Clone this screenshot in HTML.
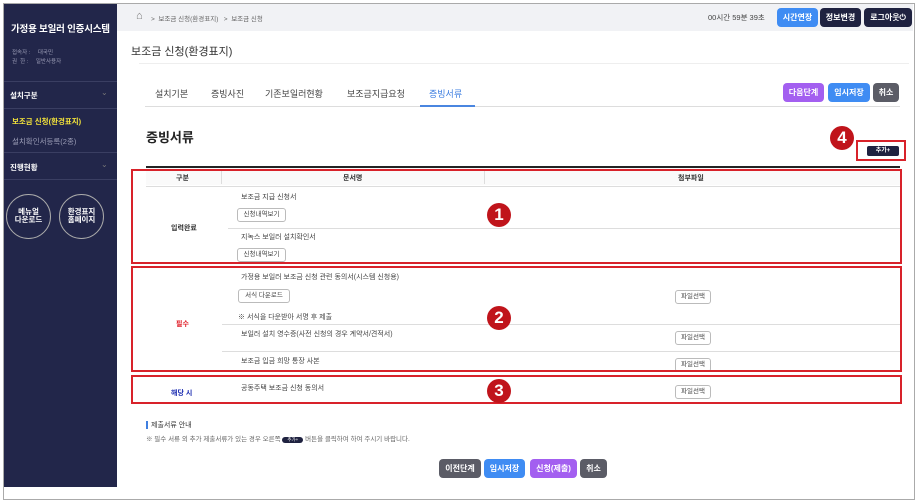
<!DOCTYPE html><html><head><meta charset="utf-8"><style>
*{margin:0;padding:0;box-sizing:border-box}
body{width:919px;height:504px;background:#fff;position:relative;overflow:hidden;font-family:"Liberation Sans","Noto Sans CJK KR",sans-serif;color:#333}
.a{position:absolute;white-space:nowrap}
.sb{background:#22264a;left:4px;top:4px;width:113px;height:483px}
.ln{position:absolute;height:1px;background:#3a3e62;left:4px;width:113px}
.btn{position:absolute;color:#fff;font-size:8px;font-weight:bold;border-radius:4px;text-align:center;line-height:19px;height:19px}
.wb{position:absolute;border:1px solid #bbb;border-radius:3px;font-size:6.5px;color:#444;text-align:center;background:#fff;height:14px;line-height:12px}
.rb{position:absolute;border:2.5px solid #d8222a}
.bd{position:absolute;width:24px;height:24px;border-radius:50%;background:#c0141b;color:#fff;font-weight:bold;font-size:17px;text-align:center;line-height:24px}
.t{font-size:7px;color:#444}
.g{position:absolute;height:1px;background:#ddd}
</style></head><body>
<div class="a" style="left:3px;top:3px;width:912px;height:497px;border:1px solid #aaa"></div>
<div class="a sb"></div>
<div class="a" style="left:11px;top:21px;color:#fff;font-size:9.5px;font-weight:bold;letter-spacing:-0.2px">가정용 보일러 인증시스템</div>
<div class="a" style="left:12px;top:49px;color:#9a9cb5;font-size:5.5px;line-height:9px">접속자 :&nbsp;&nbsp;&nbsp;&nbsp;&nbsp;대국민<br>권&nbsp;&nbsp;한 :&nbsp;&nbsp;&nbsp;&nbsp;&nbsp;일반사용자</div>
<div class="ln" style="top:81px"></div><div class="ln" style="top:108px"></div><div class="ln" style="top:152px"></div><div class="ln" style="top:179px"></div>
<div class="a" style="left:10px;top:90px;color:#fff;font-size:7.5px;font-weight:bold">설치구분</div>
<div class="a" style="left:101px;top:88px;color:#777;font-size:8px">⌄</div>
<div class="a" style="left:12px;top:116px;color:#f3e33a;font-size:7.5px;font-weight:bold">보조금 신청(환경표지)</div>
<div class="a" style="left:12px;top:136px;color:#9a9cb5;font-size:7.5px">설치확인서등록(2종)</div>
<div class="a" style="left:10px;top:162px;color:#fff;font-size:7.5px;font-weight:bold">진행현황</div>
<div class="a" style="left:101px;top:160px;color:#777;font-size:8px">⌄</div>
<div class="a" style="left:6px;top:194px;width:45px;height:45px;border:1px solid #aaa;border-radius:50%;color:#fff;font-size:7.5px;font-weight:bold;text-align:center;padding-top:13px;line-height:8px">메뉴얼<br>다운로드</div>
<div class="a" style="left:59px;top:194px;width:45px;height:45px;border:1px solid #aaa;border-radius:50%;color:#fff;font-size:7.5px;font-weight:bold;text-align:center;padding-top:13px;line-height:8px">환경표지<br>홈페이지</div>
<div class="a" style="left:117px;top:4px;width:796px;height:27px;background:#f1f2f5"></div>
<div class="a" style="left:136px;top:10px;font-size:11px;color:#777">⌂</div>
<div class="a" style="left:151px;top:13px;font-size:6.5px;color:#666">&gt;&nbsp; 보조금 신청(환경표지)&nbsp;&nbsp; &gt;&nbsp; 보조금 신청</div>
<div class="a" style="left:708px;top:12px;font-size:7.5px;color:#444">00시간 59분 39초</div>
<div class="btn" style="left:777px;top:8px;width:41px;background:#3f8cf3">시간연장</div>
<div class="btn" style="left:820px;top:8px;width:41px;background:#1f2240">정보변경</div>
<div class="btn" style="left:864px;top:8px;width:48px;background:#1f2240">로그아웃⏻</div>
<div class="a" style="left:131px;top:43px;font-size:11px;color:#333">보조금 신청(환경표지)</div>
<div class="g" style="left:139px;top:63px;width:770px;background:#eee"></div>
<div class="a" style="left:155px;top:87px;font-size:9px;color:#444">설치기본</div>
<div class="a" style="left:211px;top:87px;font-size:9px;color:#444">증빙사진</div>
<div class="a" style="left:265px;top:87px;font-size:9px;color:#444">기존보일러현황</div>
<div class="a" style="left:347px;top:87px;font-size:9px;color:#444">보조금지급요청</div>
<div class="a" style="left:429px;top:87px;font-size:9px;color:#3f7fe0">증빙서류</div>
<div class="g" style="left:145px;top:106px;width:755px"></div>
<div class="a" style="left:420px;top:105px;width:55px;height:2px;background:#4a86e0"></div>
<div class="btn" style="left:783px;top:83px;width:41px;background:#a35ff0">다음단계</div>
<div class="btn" style="left:828px;top:83px;width:42px;background:#3f8cf3">임시저장</div>
<div class="btn" style="left:873px;top:83px;width:26px;background:#5b5c66">취소</div>
<div class="a" style="left:146px;top:127px;font-size:13px;font-weight:bold;color:#222">증빙서류</div>
<div class="bd" style="left:830px;top:126px">4</div>
<div class="rb" style="left:856px;top:140px;width:50px;height:21px"></div>
<div class="btn" style="left:867px;top:146px;width:32px;height:10px;line-height:10px;font-size:6px;border-radius:2px;background:#1f2240">추가+</div>
<div class="a" style="left:146px;top:166px;width:754px;height:1.5px;background:#222"></div>
<div class="a" style="left:146px;top:168px;width:754px;height:17px;background:#fafafa"></div>
<div class="a" style="left:176px;top:173px;font-size:7px;font-weight:bold">구분</div>
<div class="a" style="left:343px;top:173px;font-size:7px;font-weight:bold">문서명</div>
<div class="a" style="left:678px;top:173px;font-size:7px;font-weight:bold">첨부파일</div>
<div class="g" style="left:221px;top:170px;width:1px;height:14px"></div>
<div class="g" style="left:484px;top:170px;width:1px;height:14px"></div>
<div class="g" style="left:146px;top:186px;width:754px"></div>
<div class="a t" style="left:241px;top:192px">보조금 지급 신청서</div>
<div class="wb" style="left:237px;top:208px;width:49px">신청내역보기</div>
<div class="g" style="left:228px;top:228px;width:672px"></div>
<div class="a t" style="left:241px;top:232px">지녹스 보일러 설치확인서</div>
<div class="wb" style="left:237px;top:248px;width:49px">신청내역보기</div>
<div class="a" style="left:171px;top:223px;font-size:7px;font-weight:bold">입력완료</div>
<div class="a t" style="left:241px;top:272px">가정용 보일러 보조금 신청 관련 동의서(시스템 신청용)</div>
<div class="wb" style="left:238px;top:289px;width:52px">서식 다운로드</div>
<div class="wb" style="left:675px;top:290px;width:36px">파일선택</div>
<div class="a t" style="left:238px;top:312px">※ 서식을 다운받아 서명 후 제출</div>
<div class="g" style="left:222px;top:324px;width:678px"></div>
<div class="a t" style="left:241px;top:329px">보일러 설치 영수증(사전 신청의 경우 계약서/견적서)</div>
<div class="wb" style="left:675px;top:331px;width:36px">파일선택</div>
<div class="g" style="left:222px;top:351px;width:678px"></div>
<div class="a t" style="left:241px;top:356px">보조금 입금 희망 통장 사본</div>
<div class="wb" style="left:675px;top:358px;width:36px">파일선택</div>
<div class="a" style="left:176px;top:319px;font-size:7px;font-weight:bold;color:#e0202a">필수</div>
<div class="a t" style="left:241px;top:383px">공동주택 보조금 신청 동의서</div>
<div class="wb" style="left:675px;top:385px;width:36px">파일선택</div>
<div class="a" style="left:171px;top:388px;font-size:7px;font-weight:bold;color:#1a2bb0">해당 시</div>
<div class="rb" style="left:131px;top:169px;width:771px;height:95px"></div>
<div class="rb" style="left:131px;top:266px;width:771px;height:106px"></div>
<div class="rb" style="left:131px;top:375px;width:771px;height:29px"></div>
<div class="bd" style="left:487px;top:203px">1</div>
<div class="bd" style="left:487px;top:306px">2</div>
<div class="bd" style="left:487px;top:379px">3</div>
<div class="a" style="left:146px;top:421px;width:2px;height:8px;background:#3f7fe0"></div>
<div class="a" style="left:151px;top:420px;font-size:7px;color:#333">제출서류 안내</div>
<div class="a" style="left:146px;top:433px;font-size:6.5px;color:#666">※ 필수 서류 외 추가 제출서류가 있는 경우 오른쪽 <span style="display:inline-block;background:#1f2240;color:#fff;font-size:4.5px;border-radius:4px;padding:0 5px;line-height:6px">추가+</span> 버튼을 클릭하여 하여 주시기 바랍니다.</div>
<div class="btn" style="left:439px;top:459px;width:42px;background:#5b5c66">이전단계</div>
<div class="btn" style="left:484px;top:459px;width:41px;background:#3f8cf3">임시저장</div>
<div class="btn" style="left:530px;top:459px;width:47px;background:#a35ff0">신청(제출)</div>
<div class="btn" style="left:580px;top:459px;width:27px;background:#5b5c66">취소</div>
</body></html>
